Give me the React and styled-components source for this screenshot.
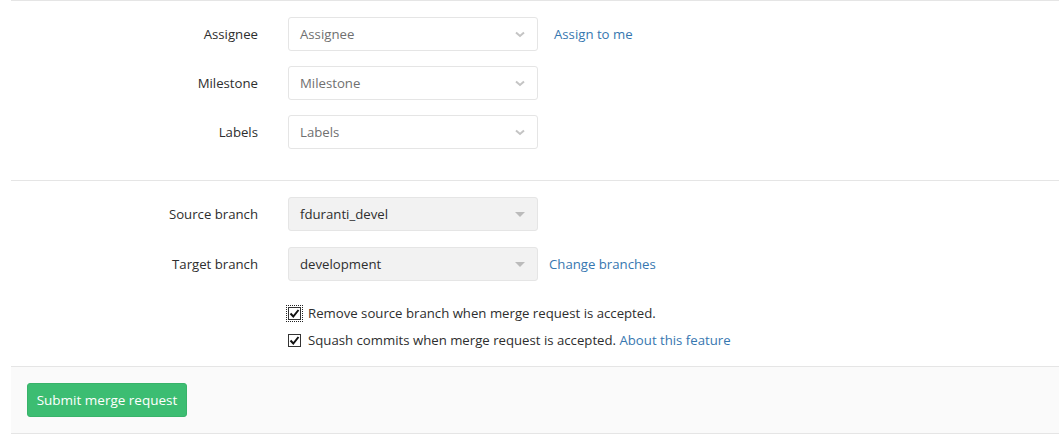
import React from 'react'
import styled, { createGlobalStyle } from 'styled-components'

const GlobalStyle = createGlobalStyle`
  body {
    margin: 0;
    background: #fff;
    font-family: "Open Sans", "Noto Sans", sans-serif;
    font-size: 13.2px;
    color: #2e2e2e;
  }
`

const Page = styled.div`
  margin-left: 11px;
  width: 1048px;
`

const Section = styled.div`
  border-top: 1px solid #e5e5e5;
  padding: ${({ $pad }) => $pad || '16px 0 0'};
  display: flex;
  flex-direction: column;
  gap: ${({ $gap }) => $gap || '15px'};
`

const Row = styled.div`
  display: flex;
  align-items: center;
  height: 34px;
`

const Label = styled.label`
  width: 247px;
  padding-right: 30px;
  text-align: right;
  color: #2e2e2e;
  flex-shrink: 0;
`

const Select = styled.div`
  box-sizing: border-box;
  width: 250px;
  height: 34px;
  display: flex;
  align-items: center;
  justify-content: space-between;
  padding: 0 12px 0 11px;
  border: 1px solid #e5e5e5;
  border-radius: 3px;
  background: ${({ $disabled }) => ($disabled ? '#f2f2f2' : '#fff')};
  color: ${({ $disabled }) => ($disabled ? '#2e2e2e' : '#707070')};
`

const Link = styled.a`
  color: #3777b0;
  text-decoration: none;
  margin-left: ${({ $ml }) => $ml || '16px'};
`

const Checks = styled.div`
  display: flex;
  flex-direction: column;
  gap: 7px;
  margin: 22px 0 16px 277px;
`

const CheckRow = styled.div`
  display: flex;
  align-items: center;
  height: 20px;
`

const Box = styled.span`
  box-sizing: border-box;
  width: 13px;
  height: 13px;
  border: 1px solid #333;
  display: inline-flex;
  align-items: center;
  justify-content: center;
  margin-right: 7px;
  outline: ${({ $focus }) => ($focus ? '1px dotted #222' : 'none')};
  outline-offset: 1px;
`

const Footer = styled.div`
  border-top: 1px solid #e5e5e5;
  border-bottom: 1px solid #e5e5e5;
  background: #fafafa;
  padding: 16px;
`

const Button = styled.button`
  box-sizing: border-box;
  width: 160px;
  height: 34px;
  border: 1px solid #38b36a;
  border-radius: 3px;
  background: #3cbd72;
  color: #fff;
  font-family: inherit;
  font-size: 13.5px;
  padding: 0;
`

function Chevron() {
  return (
    <svg width="10" height="7" viewBox="0 0 10 7">
      <path d="M1 1.5 L5 5 L9 1.5" fill="none" stroke="#c4c4c4" strokeWidth="2" />
    </svg>
  )
}

function Caret() {
  return (
    <svg width="10" height="5" viewBox="0 0 10 5">
      <path d="M0 0 H10 L5 5 Z" fill="#bbb" />
    </svg>
  )
}

function Check() {
  return (
    <svg width="11" height="11" viewBox="0 0 11 11">
      <path d="M1.5 5.5 L4.3 8.5 L9.5 2" fill="none" stroke="#111" strokeWidth="2" />
    </svg>
  )
}

export default function App() {
  return (
    <Page>
      <GlobalStyle />
      <Section $pad="16px 0 31px">
        <Row>
          <Label>Assignee</Label>
          <Select>Assignee<Chevron /></Select>
          <Link href="#">Assign to me</Link>
        </Row>
        <Row>
          <Label>Milestone</Label>
          <Select>Milestone<Chevron /></Select>
        </Row>
        <Row>
          <Label>Labels</Label>
          <Select>Labels<Chevron /></Select>
        </Row>
      </Section>
      <Section $gap="16px">
        <Row>
          <Label>Source branch</Label>
          <Select $disabled>fduranti_devel<Caret /></Select>
        </Row>
        <Row>
          <Label>Target branch</Label>
          <Select $disabled>development<Caret /></Select>
          <Link href="#" $ml="11px">Change branches</Link>
        </Row>
      </Section>
      <Checks>
        <CheckRow>
          <Box $focus><Check /></Box>
          Remove source branch when merge request is accepted.
        </CheckRow>
        <CheckRow>
          <Box><Check /></Box>
          Squash commits when merge request is accepted.&nbsp;<Link href="#" $ml="0">About this feature</Link>
        </CheckRow>
      </Checks>
      <Footer>
        <Button>Submit merge request</Button>
      </Footer>
    </Page>
  )
}
